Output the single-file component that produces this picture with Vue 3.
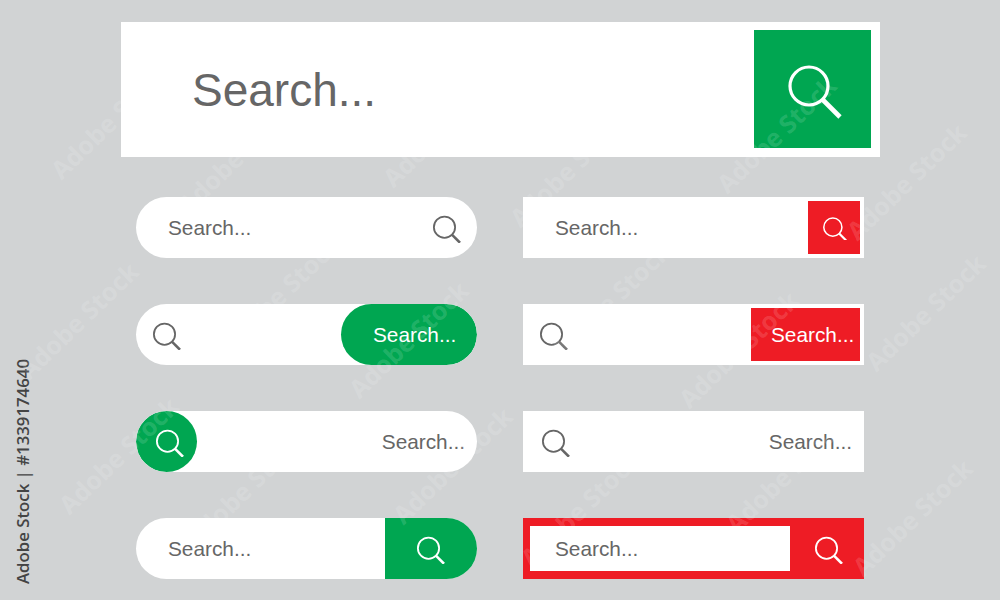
<script setup>
// faint stock marks laid over the picture: centre x, centre y
const marks = [
  [110, 120], [237, 155], [442, 128], [569, 168], [776, 134], [906, 181],
  [78, 320], [280, 293], [408, 339], [610, 300], [738, 349], [925, 312],
  [118, 455], [245, 488], [452, 465], [580, 508], [785, 474], [912, 517]
]
</script>

<template>
  <div class="page">
    <svg class="defs" aria-hidden="true">
      <symbol id="mag" viewBox="0 0 28 30">
        <circle cx="11.5" cy="14.2" r="10.6" fill="none" stroke="currentColor" stroke-width="1.8" />
        <path d="M18.9 21.6 L27 29.7" fill="none" stroke="currentColor" stroke-width="2.6" />
      </symbol>
      <symbol id="mag-big" viewBox="0 0 54 54">
        <circle cx="21" cy="21" r="19" fill="none" stroke="currentColor" stroke-width="3.2" />
        <path d="M34.5 34.5 L52 52" fill="none" stroke="currentColor" stroke-width="4.6" />
      </symbol>
    </svg>

    <div class="hero">
      <span class="hero-text">Search...</span>
      <div class="hero-btn">
        <svg class="icon-big"><use href="#mag-big" /></svg>
      </div>
    </div>

    <div class="grid">
      <div class="bar round b1">
        <span class="label">Search...</span>
        <svg class="icon"><use href="#mag" /></svg>
      </div>
      <div class="bar b2">
        <span class="label">Search...</span>
        <div class="btn red square"><svg class="icon-small"><use href="#mag" /></svg></div>
      </div>

      <div class="bar round b3">
        <svg class="icon"><use href="#mag" /></svg>
        <div class="btn green pill">Search...</div>
      </div>
      <div class="bar b4">
        <svg class="icon"><use href="#mag" /></svg>
        <div class="btn red wide">Search...</div>
      </div>

      <div class="bar round b5">
        <div class="btn green circle"><svg class="icon"><use href="#mag" /></svg></div>
        <span class="label">Search...</span>
      </div>
      <div class="bar b6">
        <svg class="icon"><use href="#mag" /></svg>
        <span class="label">Search...</span>
      </div>

      <div class="bar round b7">
        <span class="label">Search...</span>
        <div class="btn green end"><svg class="icon"><use href="#mag" /></svg></div>
      </div>
      <div class="bar b8">
        <div class="inner"><span class="label">Search...</span></div>
        <div class="btn frame"><svg class="icon"><use href="#mag" /></svg></div>
      </div>
    </div>

    <div class="stock-id">Adobe Stock | #1339174640</div>

    <span
      v-for="(m, i) in marks"
      :key="i"
      class="mark"
      :style="{ left: m[0] + 'px', top: m[1] + 'px' }"
    >Adobe Stock</span>
  </div>
</template>

<style>
body {
  margin: 0;
}
</style>

<style scoped>
.page {
  position: relative;
  width: 1000px;
  height: 600px;
  box-sizing: border-box;
  padding: 22px 0 0 121px;
  overflow: hidden;
  background: #d1d3d4;
  font-family: "Liberation Sans", Arial, sans-serif;
  color: #666;
}

.defs {
  position: absolute;
  width: 0;
  height: 0;
}

.hero {
  display: flex;
  align-items: center;
  justify-content: space-between;
  box-sizing: border-box;
  width: 759px;
  height: 135px;
  padding: 8px 9px 9px 71px;
  background: #fff;
}

.hero-text {
  margin-top: 2px;
  font-size: 46px;
}

.hero-btn {
  display: flex;
  align-items: center;
  justify-content: center;
  box-sizing: border-box;
  width: 117px;
  height: 118px;
  padding: 5px 0 0 5px;
  background: #00a651;
  color: #fff;
}

.icon-big {
  width: 54px;
  height: 54px;
}

.grid {
  display: grid;
  grid-template-columns: 341px 341px;
  grid-auto-rows: 61px;
  gap: 46px;
  margin: 40px 0 0 15px;
}

.bar {
  display: flex;
  align-items: center;
  justify-content: space-between;
  box-sizing: border-box;
  background: #fff;
  font-size: 20.8px;
  overflow: hidden;
}

.round {
  border-radius: 31px;
}

.icon {
  flex: none;
  width: 28px;
  height: 30px;
}

.icon-small {
  flex: none;
  width: 24px;
  height: 25.7px;
}

.btn {
  display: flex;
  align-items: center;
  flex: none;
  box-sizing: border-box;
  align-self: stretch;
  color: #fff;
}

.red {
  background: #ee1c25;
}

.green {
  background: #00a651;
}

.b1 {
  padding: 0 16px 0 32px;
}

.b2 {
  padding: 4px 4px 4px 32px;
}

.square {
  justify-content: center;
  width: 52px;
  padding-left: 2px;
}

.b3 {
  padding-left: 17px;
}

.pill {
  width: 136px;
  padding-left: 32px;
  border-radius: 31px;
}

.b4 {
  padding: 4px 4px 4px 17px;
}

.wide {
  width: 109px;
  padding-left: 20px;
}

.b5 {
  padding-right: 12px;
}

.circle {
  justify-content: center;
  width: 61px;
  padding-left: 6px;
  border-radius: 50%;
}

.b6 {
  padding: 0 12px 0 19px;
}

.b7 {
  padding-left: 32px;
}

.end {
  justify-content: center;
  width: 92px;
}

.b8 {
  padding: 8px 0 8px 7px;
  background: #ee1c25;
}

.inner {
  display: flex;
  align-items: center;
  box-sizing: border-box;
  width: 260px;
  height: 100%;
  padding-left: 25px;
  background: #fff;
}

.frame {
  justify-content: center;
  width: 74px;
  padding-left: 4px;
}

.stock-id {
  position: absolute;
  left: 13px;
  bottom: 16px;
  writing-mode: vertical-rl;
  transform: rotate(180deg);
  font-family: "Open Sans", sans-serif;
  font-size: 16.8px;
  font-weight: 600;
  line-height: 20px;
  color: #444;
}

.mark {
  position: absolute;
  transform: translate(-50%, -50%) rotate(-44deg);
  font-family: "Open Sans", sans-serif;
  font-size: 25px;
  font-weight: 700;
  white-space: nowrap;
  color: rgba(255, 255, 255, 0.15);
  pointer-events: none;
}
</style>
